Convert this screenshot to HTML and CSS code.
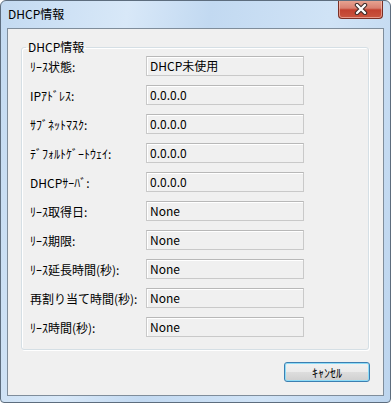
FILE: index.html
```html
<!DOCTYPE html>
<html lang="ja">
<head>
    <meta charset="UTF-8">
    <title>DHCP情報</title>
    <link rel="stylesheet" href="styles.css">
</head>
<body>
    <div class="window">
        <!-- タイトルバー -->
        <div class="titlebar">
            <span class="title">DHCP情報</span>
            <button class="close" title="閉じる">
                <svg width="16" height="12" viewBox="0 0 16 12">
                    <path d="M4 2 L12 10 M12 2 L4 10" stroke="#3b2a28" stroke-width="4.4" stroke-linecap="round"/>
                    <path d="M4 2 L12 10 M12 2 L4 10" stroke="#ffffff" stroke-width="2.4" stroke-linecap="round"/>
                </svg>
            </button>
        </div>

        <div class="client">
            <fieldset class="group">
                <legend>DHCP情報</legend>
                <div class="row"><span class="label">ﾘｰｽ状態:</span><span class="field">DHCP未使用</span></div>
                <div class="row"><span class="label">IPｱﾄﾞﾚｽ:</span><span class="field">0.0.0.0</span></div>
                <div class="row"><span class="label">ｻﾌﾞﾈｯﾄﾏｽｸ:</span><span class="field">0.0.0.0</span></div>
                <div class="row"><span class="label">ﾃﾞﾌｫﾙﾄｹﾞｰﾄｳｪｲ:</span><span class="field">0.0.0.0</span></div>
                <div class="row"><span class="label">DHCPｻｰﾊﾞ:</span><span class="field">0.0.0.0</span></div>
                <div class="row"><span class="label">ﾘｰｽ取得日:</span><span class="field">None</span></div>
                <div class="row"><span class="label">ﾘｰｽ期限:</span><span class="field">None</span></div>
                <div class="row"><span class="label">ﾘｰｽ延長時間(秒):</span><span class="field">None</span></div>
                <div class="row"><span class="label">再割り当て時間(秒):</span><span class="field">None</span></div>
                <div class="row"><span class="label">ﾘｰｽ時間(秒):</span><span class="field">None</span></div>
            </fieldset>

            <div class="actions">
                <button class="btn">ｷｬﾝｾﾙ</button>
            </div>
        </div>
    </div>
</body>
</html>
```

FILE: styles.css
```css
body {
    margin: 0;
    padding: 0;
    background-color: #ffffff;
    font-family: "Noto Sans CJK JP", "Noto Sans", sans-serif;
    font-size: 12px;
    color: #000;
}

.window {
    width: 391px;
    height: 403px;
    box-sizing: border-box;
    border: 1px solid #5d6d7e;
    border-radius: 6px 6px 4px 4px;
    background: linear-gradient(100deg, #c3daf1 0%, #d8e8f8 28%, #c2d9f1 46%, #d0e3f6 72%, #bdd5ee 100%);
    display: flex;
    flex-direction: column;
    overflow: hidden;
}

.titlebar {
    height: 27px;
    display: flex;
    justify-content: space-between;
    align-items: flex-start;
    padding-left: 7px;
    padding-right: 7px;
}

.title {
    line-height: 16px;
    margin-top: 5px;
    color: #000;
}

.close {
    width: 45px;
    height: 19px;
    margin-top: -1px;
    padding: 0;
    border: 1px solid #7a2f25;
    border-top: none;
    border-radius: 0 0 4px 4px;
    background: linear-gradient(#e9a795 0%, #d98070 45%, #c2412f 55%, #c9553f 100%);
    box-shadow: inset 0 0 0 1px rgba(255, 210, 200, 0.55);
    display: flex;
    justify-content: center;
    align-items: center;
    cursor: pointer;
}

.client {
    flex: 1;
    margin: 0 6px 6px 6px;
    border: 1px solid #7f8d9b;
    background-color: #f0f0f0;
    display: flex;
    flex-direction: column;
}

.group {
    margin: 11px 14px 0 13px;
    padding: 2px 0 12px 8px;
    border: 1px solid #d5dfe5;
    border-radius: 3px;
    box-shadow: inset 1px 1px 0 #ffffff, 1px 1px 0 #ffffff;
    display: flex;
    flex-direction: column;
    gap: 9px;
    min-width: 0;
}

.group legend {
    padding: 0 2px;
    margin-left: -4px;
    line-height: 14px;
}

.row {
    display: flex;
    align-items: center;
    height: 20px;
}

.label {
    width: 116px;
    white-space: nowrap;
}

.field {
    width: 158px;
    height: 20px;
    box-sizing: border-box;
    padding-left: 3px;
    line-height: 18px;
    border: 1px solid #c9c9c9;
    border-top-color: #b8b8b8;
    box-shadow: inset 1px 1px 0 #ffffff;
    background-color: #f0f0f0;
    white-space: nowrap;
}

.actions {
    display: flex;
    justify-content: flex-end;
    margin-top: 12px;
    margin-right: 13px;
}

.btn {
    width: 86px;
    height: 20px;
    padding: 0;
    font-family: inherit;
    font-size: 12px;
    color: #000;
    border: 1px solid #3c7fb1;
    border-radius: 3px;
    background: linear-gradient(#f2f2f2 0%, #ebebeb 48%, #dddddd 52%, #cfcfcf 100%);
    box-shadow: inset 0 0 0 1px #8fdcf7;
    cursor: pointer;
}
```
